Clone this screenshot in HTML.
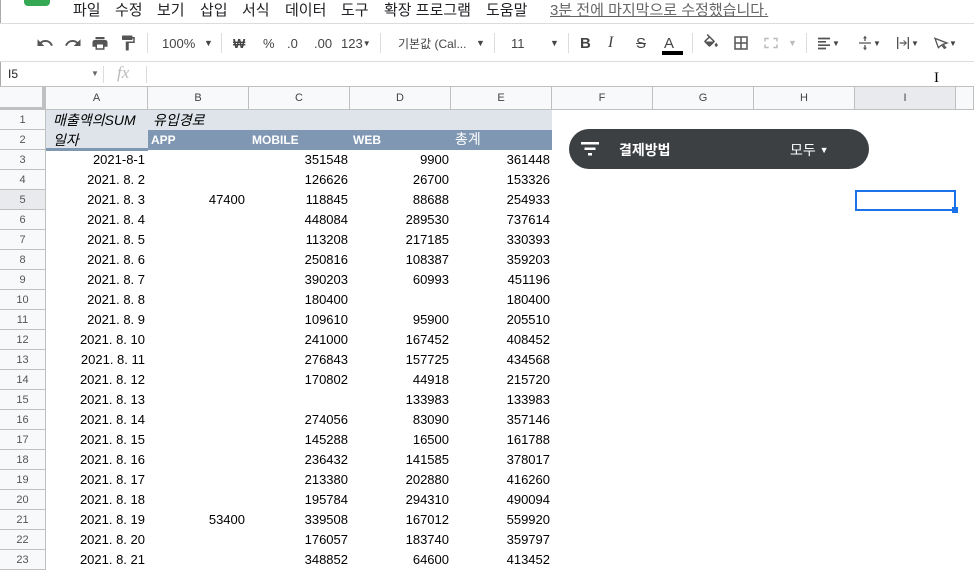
<!DOCTYPE html>
<html><head><meta charset="utf-8"><style>
*{margin:0;padding:0;box-sizing:border-box}
body{width:974px;height:562px;overflow:hidden;background:#fff;font-family:"Liberation Sans","Noto Sans CJK KR",sans-serif;position:relative;color:#000}
.a{position:absolute}
.m{position:absolute;top:-1px;font-size:15px;color:#202124;white-space:nowrap}
.tb{top:23px;left:0;width:974px;height:39px;border-top:1px solid #dadce0;border-bottom:1px solid #dadce0;background:#fff}
.ic{position:absolute;top:0;height:38px;display:flex;align-items:center;font-size:13px;color:#444}
.sep{position:absolute;top:9px;width:1px;height:20px;background:#dadce0}
.fb{top:62px;left:0;width:974px;height:25px;border-bottom:1px solid #c0c0c0}
.ch{top:87px;height:23px;border-right:1px solid #c0c0c0;border-bottom:1px solid #c0c0c0;background:#f8f9fa;font-size:11px;color:#444;text-align:center;line-height:22px}
.rh{left:0;width:46px;height:20px;border-right:1px solid #c0c0c0;border-bottom:1px solid #c0c0c0;background:#f8f9fa;font-size:11px;color:#555;text-align:center;line-height:20px}
.c{height:20px;line-height:20px;font-size:13px;text-align:right;padding-right:2px;width:101px}
</style></head><body>
<div class="a" style="top:0;left:24px;width:26px;height:6px;background:#34a853;border-radius:0 0 4px 4px"></div>
<div class="a" style="top:0;left:0;width:1px;height:562px;background:#aaa"></div>
<div class="m" style="left:73px">파일</div>
<div class="m" style="left:115px">수정</div>
<div class="m" style="left:157px">보기</div>
<div class="m" style="left:200px">삽입</div>
<div class="m" style="left:242px">서식</div>
<div class="m" style="left:285px">데이터</div>
<div class="m" style="left:341px">도구</div>
<div class="m" style="left:384px">확장 프로그램</div>
<div class="m" style="left:486px">도움말</div>
<div class="m" style="left:550px;color:#666;text-decoration:underline">3분 전에 마지막으로 수정했습니다.</div>
<div class="a tb">
<div class="ic" style="left:36px"><svg width="18" height="18" viewBox="0 0 24 24"><path d="M12.5 8c-2.6 0-5 1-6.9 2.6L2 7v9h9l-3.6-3.6c1.4-1.2 3.2-1.9 5.1-1.9 3.5 0 6.5 2.3 7.6 5.5l2.4-.8C21.1 11 17.1 8 12.5 8z" fill="#555"/></svg></div>
<div class="ic" style="left:64px"><svg width="18" height="18" viewBox="0 0 24 24"><path d="M18.4 10.6C16.6 9 14.2 8 11.5 8 6.9 8 2.9 11 1.5 15.2l2.4.8c1.1-3.2 4.1-5.5 7.6-5.5 1.9 0 3.7.7 5.1 1.9L13 16h9V7l-3.6 3.6z" fill="#555"/></svg></div>
<div class="ic" style="left:91px"><svg width="18" height="18" viewBox="0 0 24 24"><path d="M19 8H5c-1.7 0-3 1.3-3 3v6h4v4h12v-4h4v-6c0-1.7-1.3-3-3-3zm-3 11H8v-5h8v5zm2-15H6v3h12V4z" fill="#555"/></svg></div>
<div class="ic" style="left:119px"><svg width="18" height="18" viewBox="0 0 24 24"><path d="M18 4V3c0-.6-.4-1-1-1H5c-.6 0-1 .4-1 1v4c0 .6.4 1 1 1h12c.6 0 1-.4 1-1V6h1v4H9v11c0 .6.4 1 1 1h2c.6 0 1-.4 1-1v-9h8V4h-3z" fill="#555"/></svg></div>
<div class="sep" style="left:147px"></div>
<div class="ic" style="left:162px">100%</div><div class="ic" style="left:204px;font-size:9px">▼</div>
<div class="sep" style="left:221px"></div>
<div class="ic" style="left:233px;font-weight:bold">₩</div>
<div class="ic" style="left:263px">%</div>
<div class="ic" style="left:287px">.0</div>
<div class="ic" style="left:314px">.00</div>
<div class="ic" style="left:341px">123<span style="font-size:8px">▼</span></div>
<div class="sep" style="left:380px"></div>
<div class="ic" style="left:398px;font-size:12px">기본값 (Cal...</div><div class="ic" style="left:476px;font-size:9px">▼</div>
<div class="sep" style="left:494px"></div>
<div class="ic" style="left:511px">11</div><div class="ic" style="left:550px;font-size:9px">▼</div>
<div class="sep" style="left:568px"></div>
<div class="ic" style="left:580px;font-weight:bold;font-size:15px">B</div>
<div class="ic" style="left:608px;font-style:italic;font-size:16px;font-family:'Liberation Serif'">I</div>
<div class="ic" style="left:636px;text-decoration:line-through;font-size:15px">S</div>
<div class="ic" style="left:664px;font-size:15px">A</div>
<div class="a" style="left:662px;top:27px;width:21px;height:4px;background:#000"></div>
<div class="sep" style="left:692px"></div>
<div class="ic" style="left:702px"><svg width="18" height="18" viewBox="0 0 24 24"><path d="M16.6 8.9L7.6 0 6.2 1.4l2.4 2.4-5.2 5.1c-.6.6-.6 1.5 0 2.1l5.5 5.5c.3.3.7.4 1.1.4s.8-.1 1.1-.4l5.5-5.5c.6-.6.6-1.5 0-2.1zM5.2 10L10 5.2 14.8 10H5.2zM19 11.5s-2 2.2-2 3.5c0 1.1.9 2 2 2s2-.9 2-2c0-1.3-2-3.5-2-3.5z" fill="#555"/></svg></div>
<div class="ic" style="left:732px"><svg width="18" height="18" viewBox="0 0 24 24"><path d="M3 3v18h18V3H3zm8 16H5v-6h6v6zm0-8H5V5h6v6zm8 8h-6v-6h6v6zm0-8h-6V5h6v6z" fill="#555"/></svg></div>
<div class="ic" style="left:762px"><svg width="18" height="18" viewBox="0 0 24 24"><path d="M3 5h6v2H5v3H3zm12 0h6v5h-2V7h-4zM3 14h2v3h4v2H3zm16 0h2v5h-6v-2h4z" fill="#bbb"/></svg></div><div class="ic" style="left:788px;font-size:9px;color:#bbb">▼</div>
<div class="sep" style="left:806px"></div>
<div class="ic" style="left:816px"><svg width="16" height="16" viewBox="0 0 24 24"><path d="M3 4h18v2.5H3zm0 5h12v2.5H3zm0 5h18v2.5H3zm0 5h12v2.5H3z" fill="#555"/></svg><span style="font-size:8px">▼</span></div>
<div class="ic" style="left:857px"><svg width="16" height="16" viewBox="0 0 24 24"><path d="M3 11h18v2H3zM12 1l-3 4h2v4h2V5h2zm0 22l3-4h-2v-4h-2v4H9z" fill="#555"/></svg><span style="font-size:8px">▼</span></div>
<div class="ic" style="left:895px"><svg width="16" height="16" viewBox="0 0 24 24"><path d="M3 3h2v18H3zm16 0h2v18h-2zM7 11h8l-3-3h2l4 4-4 4h-2l3-3H7z" fill="#555"/></svg><span style="font-size:8px">▼</span></div>
<div class="ic" style="left:933px"><svg width="16" height="16" viewBox="0 0 24 24"><path d="M3 5l18 7-6 2 4 5-2 1-4-5-5 4z" fill="none" stroke="#555" stroke-width="2"/></svg><span style="font-size:8px">▼</span></div>
</div>
<div class="a fb">
<div class="a" style="left:8px;top:5px;font-size:12px;color:#222">I5</div>
<div class="a" style="left:91px;top:7px;font-size:8px;color:#666">▼</div>
<div class="a" style="left:103px;top:4px;width:1px;height:17px;background:#dadce0"></div>
<div class="a" style="left:117px;top:1px;font-size:17px;color:#bbb;font-style:italic;font-family:'Liberation Serif'">fx</div>
<div class="a" style="left:146px;top:4px;width:1px;height:17px;background:#dadce0"></div>
</div>
<div class="a" style="left:934px;top:70px;font-size:15px;color:#000;font-family:'Liberation Serif'">I</div>
<div class="a ch" style="left:0;width:46px;border-right:4px solid #c0c0c0;border-bottom:3px solid #c0c0c0"></div>
<div class="a ch" style="left:46px;width:102px">A</div>
<div class="a ch" style="left:148px;width:101px">B</div>
<div class="a ch" style="left:249px;width:101px">C</div>
<div class="a ch" style="left:350px;width:101px">D</div>
<div class="a ch" style="left:451px;width:101px">E</div>
<div class="a ch" style="left:552px;width:101px">F</div>
<div class="a ch" style="left:653px;width:101px">G</div>
<div class="a ch" style="left:754px;width:101px">H</div>
<div class="a ch" style="left:855px;width:101px;background:#e8eaed">I</div>
<div class="a ch" style="left:956px;width:18px"></div>
<div class="a" style="left:46px;top:110px;width:506px;height:20px;background:#dfe4ea"></div>
<div class="a" style="left:46px;top:130px;width:102px;height:20px;background:#dfe4ea"></div>
<div class="a" style="left:148px;top:130px;width:404px;height:20px;background:#7f97b2"></div>
<div class="a" style="left:46px;top:148px;width:102px;height:3px;background:#7f97b2"></div>
<div class="a" style="left:53px;top:110px;line-height:20px;font-size:14px;font-style:italic">매출액의SUM</div>
<div class="a" style="left:153px;top:110px;line-height:20px;font-size:14px;font-style:italic">유입경로</div>
<div class="a" style="left:53px;top:130px;line-height:20px;font-size:14px;font-style:italic">일자</div>
<div class="a" style="left:151px;top:130px;line-height:20px;font-size:12px;color:#fff;font-weight:bold">APP</div>
<div class="a" style="left:252px;top:130px;line-height:20px;font-size:12px;color:#fff;font-weight:bold">MOBILE</div>
<div class="a" style="left:353px;top:130px;line-height:20px;font-size:12px;color:#fff;font-weight:bold">WEB</div>
<div class="a" style="left:455px;top:129px;line-height:20px;font-size:14px;color:#fff">총계</div>
<div class="a" style="left:569px;top:129px;width:300px;height:40px;background:#3c4043;border-radius:20px"></div>
<svg class="a" style="left:581px;top:141px" width="18" height="16" viewBox="0 0 18 16"><rect x="0" y="1" width="18" height="2.5" fill="#fff"/><rect x="3.5" y="6.5" width="11" height="2.5" fill="#fff"/><rect x="7" y="12" width="4" height="2.5" fill="#fff"/></svg>
<div class="a" style="left:619px;top:140px;font-size:14px;color:#fff;font-weight:bold">결제방법</div>
<div class="a" style="left:790px;top:140px;font-size:14px;color:#fff">모두 <span style="font-size:9px;vertical-align:2px">▼</span></div>
<div class="a" style="left:855px;top:190px;width:101px;height:21px;border:2px solid #1a73e8"></div>
<div class="a" style="left:952px;top:207px;width:6px;height:6px;background:#1a73e8"></div>
<div class="a rh" style="top:110px">1</div><div class="a rh" style="top:130px">2</div>
<div class="a rh" style="top:150px">3</div><div class="a c" style="left:46px;top:150px">2021-8-1</div><div class="a c" style="left:249px;top:150px">351548</div><div class="a c" style="left:350px;top:150px">9900</div><div class="a c" style="left:451px;top:150px">361448</div>
<div class="a rh" style="top:170px">4</div><div class="a c" style="left:46px;top:170px">2021. 8. 2</div><div class="a c" style="left:249px;top:170px">126626</div><div class="a c" style="left:350px;top:170px">26700</div><div class="a c" style="left:451px;top:170px">153326</div>
<div class="a rh" style="top:190px;background:#e8eaed">5</div><div class="a c" style="left:46px;top:190px">2021. 8. 3</div><div class="a c" style="left:148px;top:190px;padding-right:4px">47400</div><div class="a c" style="left:249px;top:190px">118845</div><div class="a c" style="left:350px;top:190px">88688</div><div class="a c" style="left:451px;top:190px">254933</div>
<div class="a rh" style="top:210px">6</div><div class="a c" style="left:46px;top:210px">2021. 8. 4</div><div class="a c" style="left:249px;top:210px">448084</div><div class="a c" style="left:350px;top:210px">289530</div><div class="a c" style="left:451px;top:210px">737614</div>
<div class="a rh" style="top:230px">7</div><div class="a c" style="left:46px;top:230px">2021. 8. 5</div><div class="a c" style="left:249px;top:230px">113208</div><div class="a c" style="left:350px;top:230px">217185</div><div class="a c" style="left:451px;top:230px">330393</div>
<div class="a rh" style="top:250px">8</div><div class="a c" style="left:46px;top:250px">2021. 8. 6</div><div class="a c" style="left:249px;top:250px">250816</div><div class="a c" style="left:350px;top:250px">108387</div><div class="a c" style="left:451px;top:250px">359203</div>
<div class="a rh" style="top:270px">9</div><div class="a c" style="left:46px;top:270px">2021. 8. 7</div><div class="a c" style="left:249px;top:270px">390203</div><div class="a c" style="left:350px;top:270px">60993</div><div class="a c" style="left:451px;top:270px">451196</div>
<div class="a rh" style="top:290px">10</div><div class="a c" style="left:46px;top:290px">2021. 8. 8</div><div class="a c" style="left:249px;top:290px">180400</div><div class="a c" style="left:451px;top:290px">180400</div>
<div class="a rh" style="top:310px">11</div><div class="a c" style="left:46px;top:310px">2021. 8. 9</div><div class="a c" style="left:249px;top:310px">109610</div><div class="a c" style="left:350px;top:310px">95900</div><div class="a c" style="left:451px;top:310px">205510</div>
<div class="a rh" style="top:330px">12</div><div class="a c" style="left:46px;top:330px">2021. 8. 10</div><div class="a c" style="left:249px;top:330px">241000</div><div class="a c" style="left:350px;top:330px">167452</div><div class="a c" style="left:451px;top:330px">408452</div>
<div class="a rh" style="top:350px">13</div><div class="a c" style="left:46px;top:350px">2021. 8. 11</div><div class="a c" style="left:249px;top:350px">276843</div><div class="a c" style="left:350px;top:350px">157725</div><div class="a c" style="left:451px;top:350px">434568</div>
<div class="a rh" style="top:370px">14</div><div class="a c" style="left:46px;top:370px">2021. 8. 12</div><div class="a c" style="left:249px;top:370px">170802</div><div class="a c" style="left:350px;top:370px">44918</div><div class="a c" style="left:451px;top:370px">215720</div>
<div class="a rh" style="top:390px">15</div><div class="a c" style="left:46px;top:390px">2021. 8. 13</div><div class="a c" style="left:350px;top:390px">133983</div><div class="a c" style="left:451px;top:390px">133983</div>
<div class="a rh" style="top:410px">16</div><div class="a c" style="left:46px;top:410px">2021. 8. 14</div><div class="a c" style="left:249px;top:410px">274056</div><div class="a c" style="left:350px;top:410px">83090</div><div class="a c" style="left:451px;top:410px">357146</div>
<div class="a rh" style="top:430px">17</div><div class="a c" style="left:46px;top:430px">2021. 8. 15</div><div class="a c" style="left:249px;top:430px">145288</div><div class="a c" style="left:350px;top:430px">16500</div><div class="a c" style="left:451px;top:430px">161788</div>
<div class="a rh" style="top:450px">18</div><div class="a c" style="left:46px;top:450px">2021. 8. 16</div><div class="a c" style="left:249px;top:450px">236432</div><div class="a c" style="left:350px;top:450px">141585</div><div class="a c" style="left:451px;top:450px">378017</div>
<div class="a rh" style="top:470px">19</div><div class="a c" style="left:46px;top:470px">2021. 8. 17</div><div class="a c" style="left:249px;top:470px">213380</div><div class="a c" style="left:350px;top:470px">202880</div><div class="a c" style="left:451px;top:470px">416260</div>
<div class="a rh" style="top:490px">20</div><div class="a c" style="left:46px;top:490px">2021. 8. 18</div><div class="a c" style="left:249px;top:490px">195784</div><div class="a c" style="left:350px;top:490px">294310</div><div class="a c" style="left:451px;top:490px">490094</div>
<div class="a rh" style="top:510px">21</div><div class="a c" style="left:46px;top:510px">2021. 8. 19</div><div class="a c" style="left:148px;top:510px;padding-right:4px">53400</div><div class="a c" style="left:249px;top:510px">339508</div><div class="a c" style="left:350px;top:510px">167012</div><div class="a c" style="left:451px;top:510px">559920</div>
<div class="a rh" style="top:530px">22</div><div class="a c" style="left:46px;top:530px">2021. 8. 20</div><div class="a c" style="left:249px;top:530px">176057</div><div class="a c" style="left:350px;top:530px">183740</div><div class="a c" style="left:451px;top:530px">359797</div>
<div class="a rh" style="top:550px">23</div><div class="a c" style="left:46px;top:550px">2021. 8. 21</div><div class="a c" style="left:249px;top:550px">348852</div><div class="a c" style="left:350px;top:550px">64600</div><div class="a c" style="left:451px;top:550px">413452</div>
</body></html>
